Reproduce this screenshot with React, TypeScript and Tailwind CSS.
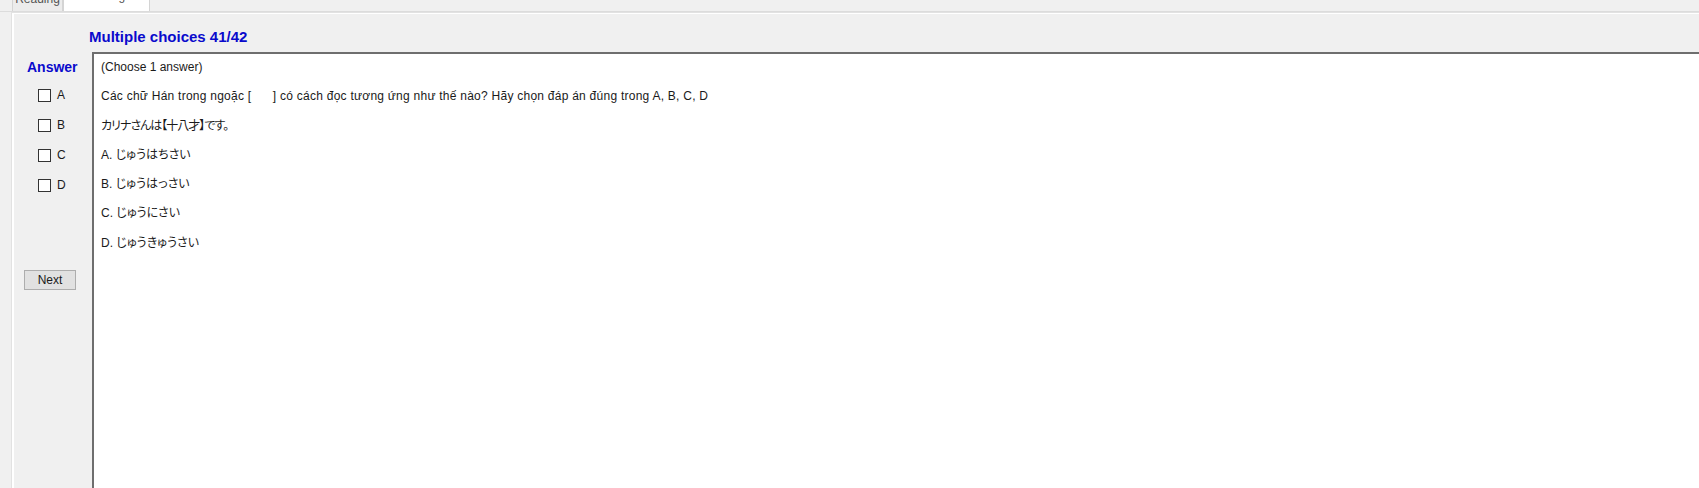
const font = "font-['Liberation_Sans','Noto_Sans_CJK_JP',sans-serif]";

const choices = ["A", "B", "C", "D"];

const lines = [
  { text: "(Choose 1 answer)", cls: "" },
  {
    text: "Các chữ Hán trong ngoặc [      ] có cách đọc tương ứng như thế nào? Hãy chọn đáp án đúng trong A, B, C, D",
    cls: "tracking-[0.25px]",
  },
  { text: "カリナさんは【十八才】です。", cls: "tracking-[-1px]" },
  { text: "A. じゅうはちさい", cls: "" },
  { text: "B. じゅうはっさい", cls: "" },
  { text: "C. じゅうにさい", cls: "" },
  { text: "D. じゅうきゅうさい", cls: "" },
];

export default function App() {
  return (
    <div className={`flex h-[488px] w-full flex-col overflow-hidden bg-[#f0f0f0] ${font} text-[12px] text-[#1a1a1a]`}>
      {/* tab strip, cut off at the top */}
      <div className="flex h-[12px] items-end overflow-hidden border-b border-[#dcdcdc] pl-[12px]">
        <div className="flex h-[22px] w-[51px] items-end justify-center border border-b-0 border-[#d4d4d4] bg-[#ececec] pb-[5px] leading-[14px] text-[#555]">
          Reading
        </div>
        <div className="flex h-[22px] w-[87px] items-end justify-center border border-b-0 border-[#d4d4d4] bg-white pb-[8px] leading-[14px] text-[#555]">
          Writing
        </div>
      </div>

      {/* tab page */}
      <div className="ml-[11px] flex flex-1 flex-col border-l border-t border-[#e2e2e2]">
        <div className="flex flex-1 flex-col border-l-2 border-t border-white">
          <div className="h-[38px] pl-[75px] pt-[14px]">
            <div className="text-[15px] font-bold leading-[18px] text-[#0a0acc]">Multiple choices 41/42</div>
          </div>

          <div className="flex flex-1">
            <div className="flex w-[78px] flex-col">
              <div className="mt-[6px] pl-[13px] text-[14px] font-bold leading-[18px] text-[#0a0acc]">Answer</div>
              <div className="mt-[4px] flex flex-col">
                {choices.map((c) => (
                  <label key={c} className="flex h-[30px] items-center gap-[6px] pl-[24px]">
                    <span className="h-[13px] w-[13px] border border-[#333] bg-white" />
                    <span className="leading-[14px]">{c}</span>
                  </label>
                ))}
              </div>
              <div className="mt-[70px] pl-[10px]">
                <button className="flex h-[20px] w-[52px] items-center justify-center border border-[#adadad] bg-[#e1e1e1] text-[12px] leading-[14px] text-[#1a1a1a]">
                  Next
                </button>
              </div>
            </div>

            <div className="flex flex-1 flex-col gap-[11.3px] border-l-2 border-t-2 border-[#6e6e6e] bg-white pl-[7px] pt-[4px]">
              {lines.map((l, i) => (
                <div key={i} className={`whitespace-pre leading-[18px] [font-feature-settings:'palt'] ${l.cls}`}>
                  {l.text}
                </div>
              ))}
            </div>
          </div>
        </div>
      </div>
    </div>
  );
}
